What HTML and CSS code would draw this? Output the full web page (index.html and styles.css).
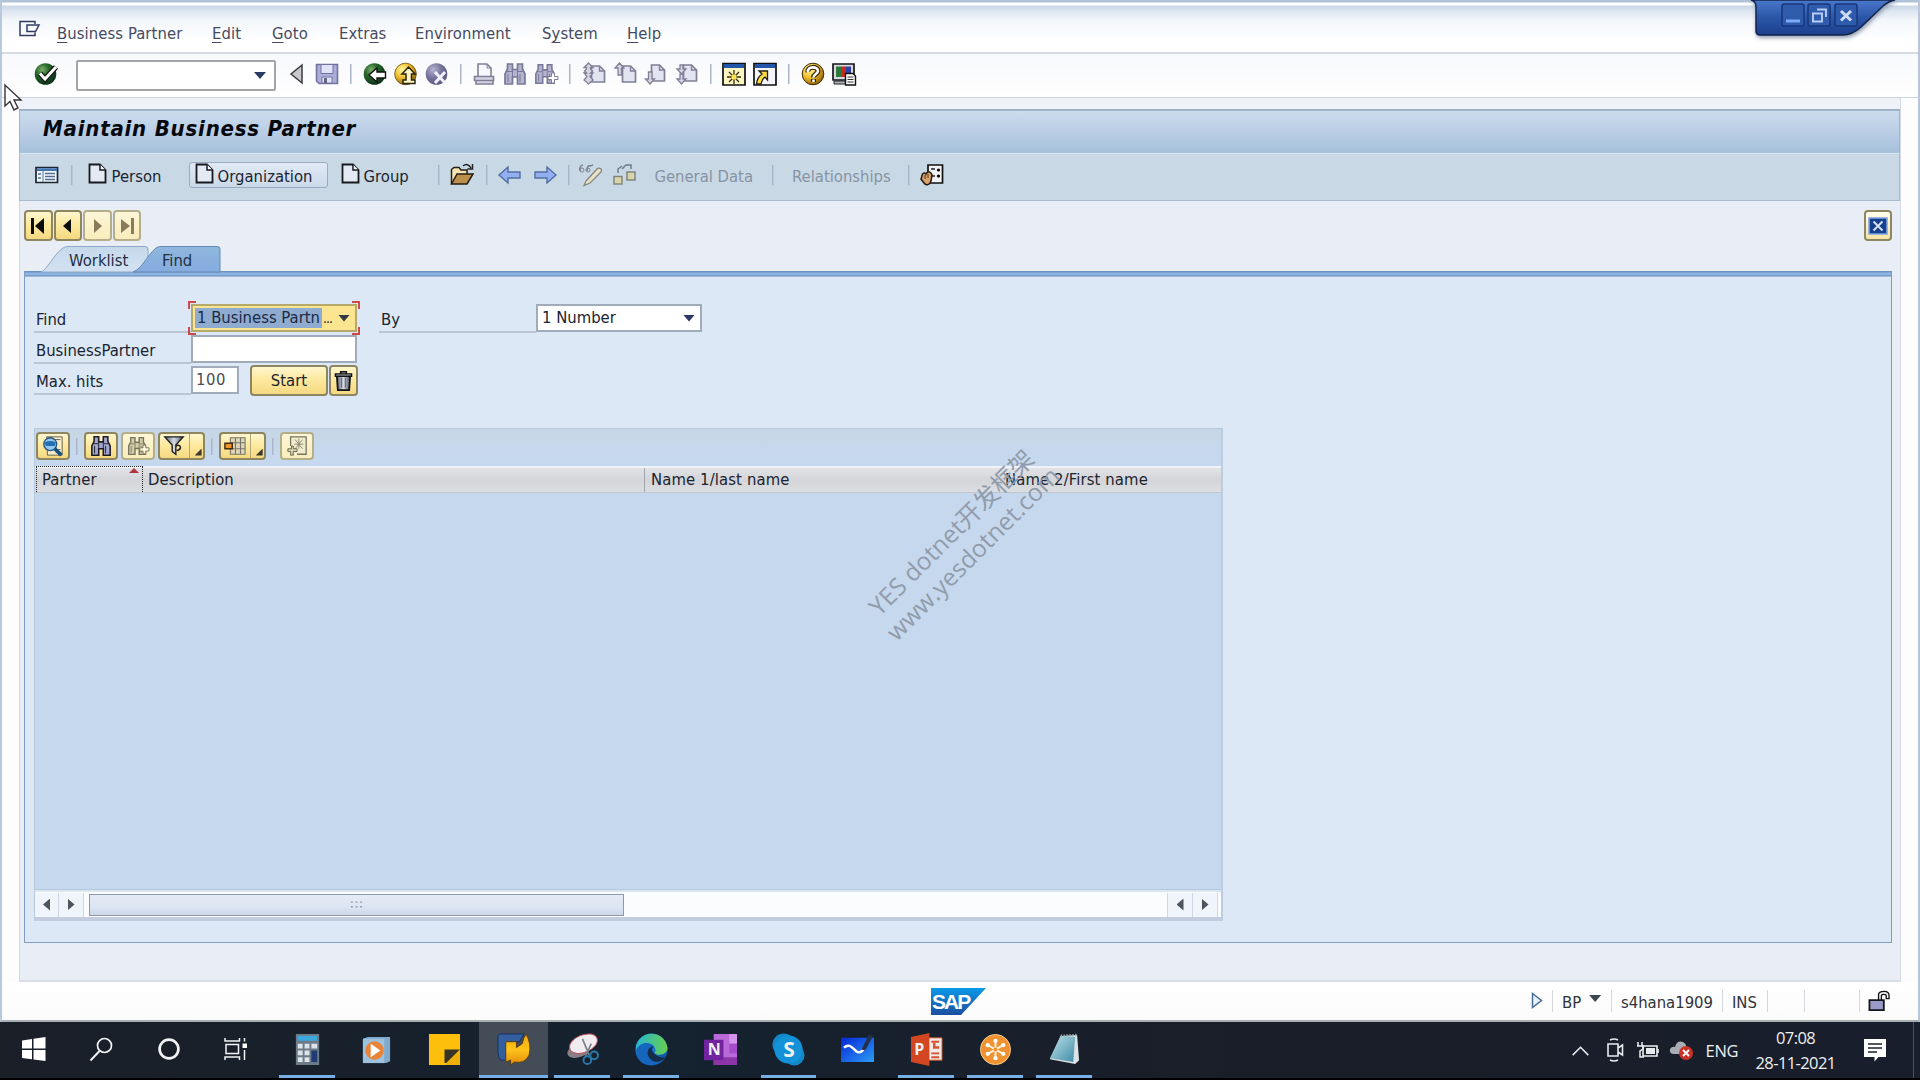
FILE: index.html
```html
<!DOCTYPE html>
<html lang="en">
<head>
<meta charset="utf-8">
<title>Maintain Business Partner</title>
<link rel="stylesheet" href="styles.css">
</head>
<body>
<svg class="defs" aria-hidden="true">
  <defs>
    <radialGradient id="gGreen" cx=".35" cy=".3" r=".75"><stop offset="0" stop-color="#7fae6c"/><stop offset=".4" stop-color="#28692b"/><stop offset="1" stop-color="#0a2c16"/></radialGradient>
    <radialGradient id="gGold" cx=".35" cy=".3" r=".75"><stop offset="0" stop-color="#fff7a0"/><stop offset=".5" stop-color="#f0bd2a"/><stop offset="1" stop-color="#8a5b08"/></radialGradient>
    <radialGradient id="gMauve" cx=".35" cy=".3" r=".75"><stop offset="0" stop-color="#b5b3cf"/><stop offset=".5" stop-color="#77759c"/><stop offset="1" stop-color="#5a587c"/></radialGradient>
    <linearGradient id="gSteel"><stop offset="0" stop-color="#5a6270"/><stop offset=".5" stop-color="#d5dae2"/><stop offset="1" stop-color="#4c5360"/></linearGradient>
    <linearGradient id="gSap" x2="0" y2="1"><stop offset="0" stop-color="#0a9ae8"/><stop offset="1" stop-color="#1c4ea0"/></linearGradient>
    <linearGradient id="gTab" x2="0" y2="1"><stop offset="0" stop-color="#4a78cb"/><stop offset=".5" stop-color="#2b56a8"/><stop offset="1" stop-color="#1b3f8c"/></linearGradient>
    <linearGradient id="gIdle" x2="0" y2="1"><stop offset="0" stop-color="#c5d9ea"/><stop offset="1" stop-color="#d3e2f3"/></linearGradient>
    <linearGradient id="gOn" x2="0" y2="1"><stop offset="0" stop-color="#8fb7dd"/><stop offset="1" stop-color="#86abdf"/></linearGradient>
    <linearGradient id="gFlame" x2="0" y2="1"><stop offset="0" stop-color="#f3a90c"/><stop offset=".5" stop-color="#ffc21a"/><stop offset="1" stop-color="#e08a0a"/></linearGradient>
    <linearGradient id="gEdge" x2=".6" y2="1"><stop offset="0" stop-color="#2eb9d4"/><stop offset=".6" stop-color="#1378cf"/><stop offset="1" stop-color="#0c50a0"/></linearGradient>
    <linearGradient id="gEdge2"><stop offset="0" stop-color="#28b6cf"/><stop offset="1" stop-color="#66cf52"/></linearGradient>
    <linearGradient id="gBoard" x2="1" y2="1"><stop offset="0" stop-color="#0528d8"/><stop offset="1" stop-color="#2d9bf5"/></linearGradient>
    <linearGradient id="gNote" x2="1" y2="1"><stop offset="0" stop-color="#bfe3ec"/><stop offset="1" stop-color="#3f8ba4"/></linearGradient>
  </defs>
  <symbol id="doc" viewBox="0 0 20 22"><path d="M1.500 1.500H12L17.500 7V19.500H1.500Z" fill="#e3eaf4" stroke="#17191f" stroke-width="1.800"/><path d="M12 1.500V7H17.500" fill="#fff" stroke="#17191f" stroke-width="1.500"/></symbol>
  <symbol id="bino" viewBox="0 0 24 24"><path d="M4.500 2h5v5.500h5V2h5v5L22 12v10h-7.500v-7h-5v7H2V12l2.500-5Z" stroke-width="1.700" stroke="currentColor"/><path d="M9.500 8v7m5-7v7M4 9.500h5m6 0h5M5 12v8m12-8v8" stroke="currentColor" fill="none"/></symbol>
  <symbol id="page" viewBox="0 0 16 20"><path d="M1.500 2H9.500L14.500 7V18H1.500Z" fill="#e3e4f2" stroke="#807f97" stroke-width="1.700"/><path d="M9.500 2V7H14.500" fill="none" stroke="#807f97" stroke-width="1.400"/></symbol>
</svg>

<div class="window">
  <nav class="menubar">
    <svg class="sysmenu" viewBox="0 0 22 18"><path d="M16 4V1.500H1V15.500H16V12.500M20 5H8V11.500H16.500Z" fill="none" stroke="#303c62" stroke-width="1.500"/></svg>
    <span class="m1"><u>B</u>usiness Partner</span><span class="m2"><u>E</u>dit</span><span class="m3"><u>G</u>oto</span><span class="m4">Extr<u>a</u>s</span><span class="m5">En<u>v</u>ironment</span><span class="m6">S<u>y</u>stem</span><span class="m7"><u>H</u>elp</span>
  </nav>

  <div class="stdbar">
    <svg class="ic" viewBox="0 0 24 24"><circle cx="11.500" cy="12" r="10.800" fill="url(#gGreen)"/><path d="M6 11.500L11 17L22 5" fill="none" stroke="#111" stroke-width="5.500"/><path d="M6 11.500L11 17L22 5" fill="none" stroke="#fff" stroke-width="3"/></svg>
    <div class="command"><i class="drop"></i></div>
    <svg class="ic" viewBox="0 0 24 24"><path d="M18 3V21L7 12Z" fill="#c8c8cc" stroke="#3b3b40" stroke-width="1.500"/></svg>
    <svg class="ic" viewBox="0 0 24 24"><path d="M1.500 2.500H22.500V21.500H4L1.500 19Z" fill="#aaaed9" stroke="#7473a0" stroke-width="1.600"/><path d="M6 2.500h12v9H6Z" fill="#dfe3f7" stroke="#7473a0"/><path d="M7 15h10v6H7Z" fill="#e5e6f4" stroke="#7473a0"/><path d="M9 16h3v5H9Z" fill="#62618c"/></svg>
    <i class="sep"></i>
    <svg class="ic" viewBox="0 0 24 24"><circle cx="11.500" cy="12" r="10.800" fill="url(#gGreen)"/><path d="M6 13L14 6V10H22.500V16H14V20Z" fill="#fff" stroke="#111" stroke-width="1.400"/></svg>
    <svg class="ic" viewBox="0 0 24 24"><circle cx="11.500" cy="12" r="10.800" fill="url(#gGold)" stroke="#6b4a0b" stroke-width=".8"/><path d="M14.500 5L21 12H17.500V18H21V21.500H9V18H12V12H8Z" fill="#fff6c4" stroke="#2a2414" stroke-width="1.500"/></svg>
    <svg class="ic" viewBox="0 0 24 24"><circle cx="11.500" cy="12" r="10.800" fill="url(#gMauve)"/><path d="M10 10L20 21M20 10L10 21" stroke="#f1f0fb" stroke-width="3"/></svg>
    <i class="sep"></i>
    <svg class="ic" viewBox="0 0 24 24"><path d="M6 14V2h9l4 4v8" fill="#f7f7fd" stroke="#817f98" stroke-width="1.600"/><path d="M15 2v4h4" fill="none" stroke="#817f98"/><path d="M2.500 14.500h19v4h-19ZM4 18.500h17V22H4Z" fill="#d4d4e4" stroke="#817f98" stroke-width="1.600"/></svg>
    <svg class="ic bino-off"><use href="#bino"/></svg>
    <svg class="ic" viewBox="0 0 24 24"><g class="bino-off"><use href="#bino" width="22" height="24"/></g><path d="M14 14.500h3.500V11h3v3.500H24v3h-3.500V21h-3v-3.500H14Z" fill="#fff" stroke="#817f98"/></svg>
    <i class="sep"></i>
    <svg class="ic" viewBox="0 0 24 24"><use href="#page" x="8" y="2" width="16" height="20"/><path d="M6.500 1L11 5.500H8.500V7L10.500 9L8.500 11H11L8 14.500L11 18L6.500 22L2 18L5 14.500L2 11H4.500L2.500 9L4.500 7V5.500H2Z" fill="#d5d5e4" stroke="#807f97" stroke-width="1.300"/></svg>
    <svg class="ic" viewBox="0 0 24 24"><use href="#page" x="8" y="2" width="16" height="20"/><path d="M6.500 1L11 6H8.500V13H5V6H2Z" fill="#d5d5e4" stroke="#807f97" stroke-width="1.300"/></svg>
    <svg class="ic" viewBox="0 0 24 24"><use href="#page" x="6" y="1" width="16" height="20"/><path d="M4.500 10H8V17H10.500L6 22L1.500 17H4.500Z" fill="#d5d5e4" stroke="#807f97" stroke-width="1.300"/></svg>
    <svg class="ic" viewBox="0 0 24 24"><use href="#page" x="7" y="1" width="16" height="20"/><path d="M5 3H8V7H11L6.500 12L2 7H5ZM5 12H8V17H11L6.500 22L2 17H5Z" fill="#d5d5e4" stroke="#807f97" stroke-width="1.300"/></svg>
    <i class="sep"></i>
    <svg class="ic" viewBox="0 0 24 24"><path d="M1 1.500H23V23H1Z" fill="#fff6c0" stroke="#101010" stroke-width="1.700"/><path d="M2 2H22V6H2Z" fill="#2355a8"/><path d="M12 8v14M5 15h14M7 10l10 10M17 10L7 20" stroke="#30290c" stroke-width="1.300"/><circle cx="12" cy="15" r="2.600" fill="#ffe54a"/></svg>
    <svg class="ic" viewBox="0 0 24 24"><path d="M1 1.500H23V23H1Z" fill="#f4f5fa" stroke="#101010" stroke-width="1.700"/><path d="M2 2H22V6H2Z" fill="#2355a8"/><path d="M6 9H14.500V18L12 15C9 17 9 19 8 22H3.500C4 17 6 14 9 12Z" fill="#fbdc44" stroke="#231e0b" stroke-width="1.300"/></svg>
    <i class="sep"></i>
    <svg class="ic" viewBox="0 0 24 24"><circle cx="12" cy="12" r="10.800" fill="url(#gGold)" stroke="#3d2b06"/><path d="M7 10C6 4 17 4 17 9C17 12 12.500 12 12.500 15.500M12.500 17V20" fill="none" stroke="#33270c" stroke-width="5"/><path d="M7 10C6 4 17 4 17 9C17 12 12.500 12 12.500 15.500M12.500 17.500V20" fill="none" stroke="#fff" stroke-width="2.600"/></svg>
    <svg class="ic" viewBox="0 0 24 24"><path d="M1 2H22V18H1Z" fill="#d7d9de" stroke="#15171a" stroke-width="1.700"/><path d="M2 19h18v3H2Z" fill="#aeb1ba" stroke="#222"/><path d="M4 4.500h5V15H4Z" fill="#2c7a38"/><path d="M9 4.500h5V15H9Z" fill="#c62b22"/><path d="M14 4.500h5V15h-5Z" fill="#2b3fa5"/><path d="M13.500 11.500H21L23.500 14V23H13.500Z" fill="#fff" stroke="#111" stroke-width="1.400"/><path d="M15.500 15h6m-6 2.500h6m-6 2.500h6" stroke="#333"/></svg>
  </div>

  <main class="screen">
    <header class="title">Maintain Business Partner</header>
    <div class="appbar">
      <svg class="ai a1" viewBox="0 0 24 18"><path d="M1 1.500H22.500V16.500H1Z" fill="#f3f7fc" stroke="#1c2531" stroke-width="1.700"/><path d="M2 2.300h20V5H2Z" fill="#4077b4"/><path d="M8 5v11" stroke="#4b77a5"/><path d="M10 7.500h10M10 10.500h10M10 13.500h10M3 8h3m-3 4h3" stroke="#526f91" stroke-width="1.500"/></svg>
      <i class="sep s1"></i>
      <svg class="doc d1"><use href="#doc"/></svg><span class="p1">Person</span>
      <button class="org"><svg class="doc"><use href="#doc"/></svg><span>Organization</span></button>
      <svg class="doc d3"><use href="#doc"/></svg><span class="p3">Group</span>
      <i class="sep s2"></i>
      <svg class="ai" viewBox="0 0 24 24"><path d="M1.500 21V6.500L4 4.500H9L11 7H17V11" fill="#f5e3b4" stroke="#241d12" stroke-width="1.500"/><path d="M1.500 21L7 11H23L17 21Z" fill="#bc8f4c" stroke="#241d12" stroke-width="1.500"/><path d="M13 3C16 .5 19 1.500 21 5M22.500 1V6H17.500" fill="none" stroke="#222" stroke-width="1.500"/></svg>
      <i class="sep s3"></i>
      <svg class="ai" viewBox="0 0 24 24"><path d="M1 12L10 4V9H22V15H10V20Z" fill="#92b0f1" stroke="#526f9f" stroke-width="1.400"/></svg>
      <svg class="ai a4" viewBox="0 0 24 24"><path d="M23 12L14 4V9H2V15H14V20Z" fill="#92b0f1" stroke="#526f9f" stroke-width="1.400"/></svg>
      <i class="sep s4"></i>
      <svg class="ai" viewBox="0 0 24 24"><path d="M7 18L18 6C20 4 24 6 22 9L11 20L5 22.500Z" fill="#e7e1c5" stroke="#85887f" stroke-width="1.300"/><path d="M1 8C0 5 2 2 4 2M8 8C8 4 9 2 11 3L14 2" fill="none" stroke="#7b848e" stroke-width="1.500"/><circle cx="3" cy="7" r="2" fill="none" stroke="#7b848e"/><circle cx="9" cy="7" r="2" fill="none" stroke="#7b848e"/></svg>
      <svg class="ai a6" viewBox="0 0 24 24"><path d="M2 13.500h8V21H2ZM15 9h8v8h-8Z" fill="#d9d5a9" stroke="#80877f" stroke-width="1.500"/><path d="M6 10V6L10 3M10 6L14 2H19V6" fill="none" stroke="#727b86" stroke-width="1.500"/></svg>
      <span class="off g1">General Data</span>
      <i class="sep s5"></i>
      <span class="off g2">Relationships</span>
      <i class="sep s6"></i>
      <svg class="ai" viewBox="0 0 24 24"><path d="M8 2H22.500V20H8Z" fill="#f2f3f6" stroke="#111" stroke-width="1.700"/><path d="M11 6h4m-4 7h4" stroke="#222" stroke-width="1.500"/><circle cx="18.500" cy="7" r="1.600"/><circle cx="18.500" cy="13" r="1.600"/><path d="M2 13C2 10 5 9 6 11C8 7 11 9 12 12L11 18C10 22 6 23 4 20L1 16Z" fill="#d9a36b" stroke="#23180f" stroke-width="1.500"/><path d="M5 12v4m3-5v4" stroke="#4c3018"/></svg>
    </div>

    <div class="work">
      <div class="navrow">
        <button class="y nb"><svg viewBox="0 0 14 16"><path d="M0 0h3v16H0ZM13 0v16L4 8Z"/></svg></button>
        <button class="y nb"><svg viewBox="0 0 14 16"><path d="M10 1v14L2 8Z"/></svg></button>
        <button class="y nb dim"><svg viewBox="0 0 14 16"><path d="M4 1v14l8-7Z"/></svg></button>
        <button class="y nb dim"><svg viewBox="0 0 14 16"><path d="M11 0h3v16h-3ZM1 1v14l9-7Z"/></svg></button>
        <button class="y nb close"><svg viewBox="0 0 20 18"><path d="M1 1h18v16H1Z" fill="#173f8f" stroke="#7fa5de" stroke-width="1.600"/><path d="M5.500 4.500l9 9m0-9l-9 9" stroke="#d4e0ef" stroke-width="2"/></svg></button>
      </div>
      <div class="tabs">
        <svg viewBox="0 0 200 26"><path d="M17 26C23 24 30 8 39 2Q41 .5 44 .5H121Q124 .5 124 3V26Z" fill="url(#gIdle)" stroke="#8ea9c6"/><path d="M109 26C118 23 124 8 132 2Q134 .5 137 .5H193Q196 .5 196 3V26Z" fill="url(#gOn)" stroke="#6289b5"/></svg>
        <span class="t1">Worklist</span><span class="t2">Find</span>
      </div>
      <section class="panel">
        <div class="row">
          <label>Find</label>
          <div class="field combo focus"><mark>1 Business Partn</mark><span class="dots">...</span><i class="drop"></i><i class="c tl"></i><i class="c tr"></i><i class="c bl"></i><i class="c br"></i></div>
          <label class="by">By</label>
          <div class="field combo">1 Number<i class="drop"></i></div>
        </div>
        <div class="row"><label>BusinessPartner</label><div class="field"></div></div>
        <div class="row"><label>Max. hits</label><div class="field hits">100</div>
          <button class="y start">Start</button>
          <button class="y trash"><svg viewBox="0 0 20 22"><path d="M3 6h14l-1 14.500H4Z" fill="url(#gSteel)" stroke="#111" stroke-width="1.800"/><path d="M1.500 3.500h17V6h-17ZM7 3V1.200h6V3" fill="#aab0ba" stroke="#111" stroke-width="1.500"/><path d="M8 8v10m4-10v10" stroke="#596170"/></svg></button>
        </div>

        <div class="grid">
          <div class="gridbar">
            <button class="y gb"><svg viewBox="0 0 24 24"><path d="M5 2H22V22H6Z" fill="#f6edc6" stroke="#5d5a46"/><path d="M14 5h6m-6 11h6m-5 3h5" stroke="#555"/><circle cx="9" cy="10" r="7" fill="#93c8ee" stroke="#28537c" stroke-width="1.500"/><path d="M3 8Q9 5 15 8L14 12H4Z" fill="#236fb4"/><path d="M14 15L21 22" stroke="#1a4f82" stroke-width="4"/></svg></button>
            <i class="sep"></i>
            <button class="y gb"><svg class="bino-on"><use href="#bino"/></svg></button>
            <button class="y gb gb3 dim"><svg viewBox="0 0 24 24"><g class="bino-dim"><use href="#bino" width="22" height="24"/></g><path d="M14 14h3.500v-3h3v3H24v3.500h-3.500v3h-3v-3H14Z" fill="#fffadd" stroke="#77735b"/></svg></button>
            <button class="y gb split gb4"><svg viewBox="0 0 24 24"><path d="M2 2H22L14 11V21L10 18V11Z" fill="url(#gSteel)" stroke="#1b1d22" stroke-width="1.500"/><path d="M14 12C20 9 21 16 15 17" fill="none" stroke="#222" stroke-width="1.600"/></svg><i class="bar"></i><i class="corner"></i></button>
            <i class="sep"></i>
            <button class="y gb split"><svg viewBox="0 0 24 24"><path d="M7 3H23V21H7ZM7 8.500H23M7 15H23M12.500 3V21M18 3V21" fill="#ddd6b4" stroke="#77756a" stroke-width="1.200"/><path d="M1 9h8v6H1Z" fill="#f09329" stroke="#422c12" stroke-width="1.600"/></svg><i class="bar"></i><i class="corner"></i></button>
            <i class="sep"></i>
            <button class="y gb dim2"><svg viewBox="0 0 24 24"><path d="M5 12V2H22V21H12" fill="#f2edcf" stroke="#77745f" stroke-width="1.400"/><path d="M10 5l8 10M18 5l-8 10M14 4v11M9 10h10" stroke="#88846c"/><path d="M2 15h4v-3h2v3h4v3H8v4H5v-4H2Z" fill="#d8d2ab" stroke="#66634f"/></svg></button>
          </div>
          <div class="heads"><div class="h1c">Partner<i class="sort"></i></div><div class="h2c">Description</div><div class="h3c">Name 1/last name</div><div class="h4c">Name 2/First name</div></div>
          <div class="body"></div>
          <div class="scroll">
            <span class="sb"><i class="l"></i></span><span class="sb w"><i class="r"></i></span>
            <div class="thumb"><svg viewBox="0 0 14 9"><path d="M1 2h2m3 0h2m3 0h2M1 7h2m3 0h2m3 0h2" stroke="#8d99ad" stroke-width="1.500"/></svg></div>
            <div class="track"></div>
            <span class="sb w"><i class="l"></i></span><span class="sb w"><i class="r"></i></span>
          </div>
        </div>
      </section>
    </div>
  </main>

  <footer class="status">
    <div class="saplogo"><svg viewBox="0 0 55 27"><path d="M0 0H55L30 27H0Z" fill="url(#gSap)"/></svg><b>SAP</b></div>
    <svg class="play" viewBox="0 0 12 17"><path d="M1.500 1.500L10.500 8.500L1.500 15.500Z" fill="#e8f2fc" stroke="#466a96" stroke-width="1.500"/></svg>
    <span class="st bp">BP<i class="drop"></i></span><span class="st host">s4hana1909</span><span class="st ins">INS</span><span class="st e1"></span><span class="st e2"></span><span class="st lockc"><svg viewBox="0 0 24 23"><path d="M11 11V5Q11 1.500 17 1.500Q22 1.500 22 6V9H19V6Q19 4.500 16.500 4.500Q14 4.500 14 6V11" fill="#f0f0f4" stroke="#111" stroke-width="1.400"/><path d="M1.500 10.500H16.500V21H1.500Z" fill="#9a9ac8" stroke="#15151c" stroke-width="1.900"/></svg></span>
  </footer>

  <div class="wintab">
    <svg viewBox="0 0 144 38"><path d="M0 0Q5 1 5 7V31Q5 35 9 35H92Q101 35 110 27L132 6Q138 1 144 0Z" fill="url(#gTab)" stroke="#132449" stroke-width="1.500"/><g fill="#2f5bad" stroke="#17377c" stroke-width="1.500"><rect x="31" y="4" width="22" height="22" rx="2"/><rect x="57" y="4" width="22" height="22" rx="2"/><rect x="84" y="4" width="22" height="22" rx="2"/></g><path d="M35 21H49" stroke="#7fa8f6" stroke-width="3"/><path d="M62 13.500H71V21.500H62ZM66 9.500H75V17" fill="none" stroke="#b9cdf6" stroke-width="1.900"/><path d="M90 11L100 20.500M100 11L90 20.500" stroke="#cfdbf5" stroke-width="3"/></svg>
  </div>
</div>

<div class="taskbar">
  <span class="tk sys"><svg viewBox="0 0 24 24"><path d="M0 3.500L10 2V11.500H0ZM11.500 1.800L23.500 0V11.500H11.500ZM0 13H10V22.300L0 21ZM11.500 13H23.500V24L11.500 22.500Z" fill="#fff"/></svg></span>
  <span class="tk sys"><svg viewBox="0 0 24 24"><circle cx="15.500" cy="8.500" r="7" fill="none" stroke="#f2f4f6" stroke-width="1.700"/><path d="M10.500 14L1.500 23.500" stroke="#f2f4f6" stroke-width="1.900"/></svg></span>
  <span class="tk sys"><svg viewBox="0 0 24 24"><circle cx="12" cy="12" r="9.400" fill="none" stroke="#f2f4f6" stroke-width="2.700"/></svg></span>
  <span class="tk sys"><svg viewBox="0 0 24 24"><path d="M1 1V4H15.500V1M1 23V20H15.500V23M2 7.500H14.500V16.500H2ZM20.500 1V4.500M20.500 13V23" fill="none" stroke="#f2f4f6" stroke-width="1.500"/><path d="M18.500 6.500H23V11H18.500Z" fill="#fff"/></svg></span>
  <span class="tk app run"><svg viewBox="0 0 34 34"><path d="M5 1H29V33H5Z" fill="#6d7b87"/><path d="M7 3H27V8H7Z" fill="#3ba7df"/><path d="M7 11h5v5H7Zm7 0h5v5h-5Zm7 0h6v5h-6ZM7 18h5v5H7Zm7 0h5v5h-5ZM7 25h5v5H7Zm7 0h5v5h-5Z" fill="#dce3ea"/><path d="M21 18h6v12h-6Z" fill="#1e3d75"/></svg></span>
  <span class="tk app"><svg viewBox="0 0 34 34"><path d="M3 6L8 4H31V29L27 31H3Z" fill="#7fa9cd"/><path d="M3 6H25V31H3Z" fill="#9cc2dd"/><circle cx="15" cy="18" r="9.500" fill="#e8843a"/><path d="M11 11L21 18L11 25Z" fill="#fff"/></svg></span>
  <span class="tk app"><svg viewBox="0 0 34 34"><path d="M1 1H33V33H1Z" fill="#fdbf0b"/><path d="M17 17H33L19 31H17Z" fill="#373425"/><path d="M33 17L19 31V33H33Z" fill="#eeaf09"/></svg></span>
  <span class="tk app run sel"><svg viewBox="0 0 34 34"><path d="M1 3Q1 1 4 1H28L23 9H11Q9 9 9 12V28H4Q1 25 1 20Z" fill="#345f9f" stroke="#18315f"/><path d="M9 9H20V15L26 11Q27 5 30 1Q36 12 33 23Q29 32 18 30L14 33V28L9 30Z" fill="url(#gFlame)" stroke="#573d15"/></svg></span>
  <span class="tk app run"><svg viewBox="0 0 34 34"><ellipse cx="13" cy="18" rx="12" ry="7" fill="#8b7f87" transform="rotate(-20 13 18)"/><ellipse cx="18" cy="11" rx="15" ry="9" fill="#f1ecef" stroke="#b4525d" transform="rotate(-22 18 11)"/><path d="M17 6L24 23M26 11L20 24" stroke="#75838c" stroke-width="1.700"/><circle cx="29" cy="23" r="4" fill="none" stroke="#2b79ac" stroke-width="2"/><circle cx="22" cy="28" r="4" fill="none" stroke="#2b79ac" stroke-width="2"/></svg></span>
  <span class="tk app run"><svg viewBox="0 0 34 34"><circle cx="17" cy="17" r="16.500" fill="url(#gEdge)"/><path d="M1 14C5-3 30-4 33.500 15C34 22 25 24 20 21C23 17 20 11 14 11C7 11 2 15 1 20Z" fill="url(#gEdge2)"/><path d="M1 18C5 8 17 9 19 14C13 14 11 25 20 29C24 31 29 28 31 26C24 36 2 37 1 18Z" fill="#1766bd"/><path d="M20 21C16 18 18 16 19 14C12 14 10 25 19 29C24 31 29 28 31 25Q25 26 20 21Z" fill="#152d4b"/></svg></span>
  <span class="tk app"><svg viewBox="0 0 34 34"><path d="M10 1H34V33H10Z" fill="#b96ad8"/><path d="M26 1h8v10h-8Z" fill="#d494ed"/><path d="M26 11h8v10h-8Z" fill="#a54ccb"/><path d="M10 25H34V33H10Z" fill="#8c34a8"/><path d="M0 7H20V28H0Z" fill="#7224a0"/></svg><b class="n">N</b></span>
  <span class="tk app run"><svg viewBox="0 0 34 34"><circle cx="12" cy="12" r="11.500" fill="#1487c9"/><circle cx="23" cy="23" r="10.500" fill="#1487c9"/><circle cx="17" cy="17" r="14.500" fill="#1392d7"/></svg><b>S</b></span>
  <span class="tk app"><svg viewBox="0 0 34 34"><path d="M0 5H34V30H0Z" fill="url(#gBoard)"/><path d="M3 15C9 10 12 16 16 19S21 18 25 16" fill="none" stroke="#fff" stroke-width="2.500"/><path d="M21 17L29 1L33 3L25 18Z" fill="#23324b"/></svg></span>
  <span class="tk app run"><svg viewBox="0 0 34 34"><path d="M15 5H33V28H15Z" fill="#f5e9e5" stroke="#c95832"/><path d="M22 9h8m-8 12h8m-8 4h8" stroke="#d35230" stroke-width="2"/><path d="M25 10v5h5" fill="none" stroke="#d35230" stroke-width="2.500"/><path d="M1 4L20 0V34L1 30Z" fill="#d24621"/></svg><b class="n">P</b></span>
  <span class="tk app run"><svg viewBox="0 0 34 34"><circle cx="17" cy="17" r="15.500" fill="#ef922f" stroke="#f7cc94"/><g stroke="#fff2df" stroke-width="2"><path d="M17 8V26M9 12.500L25 21.500M25 12.500L9 21.500"/></g><g fill="#fff"><circle cx="17" cy="8" r="2.200"/><circle cx="17" cy="26" r="2.200"/><circle cx="9" cy="12.500" r="2.200"/><circle cx="25" cy="21.500" r="2.200"/><circle cx="25" cy="12.500" r="2.200"/><circle cx="9" cy="21.500" r="2.200"/></g><circle cx="17" cy="17" r="2" fill="#ef922f"/></svg></span>
  <span class="tk app run"><svg viewBox="0 0 34 34"><path d="M13 3L30 2L32 28L28 32L2 27Z" fill="#dce3e5"/><path d="M13 3L28 4L26 30L2 26Z" fill="url(#gNote)"/><path d="M13 3L30 2" stroke="#9aa" stroke-width="2.500" stroke-dasharray="1.500 1.500"/></svg></span>
  <div class="tray">
    <svg class="ch" viewBox="0 0 20 12"><path d="M1.500 11L10 2.500L18.500 11" fill="none" stroke="#e8ebee" stroke-width="1.700"/></svg>
    <svg class="cam" viewBox="0 0 18 24"><path d="M2 6H12V18H2ZM12 10L16.500 7V17L12 14M4 2Q8 0 12 2M4 22Q8 24 12 22" fill="none" stroke="#e8ebee" stroke-width="1.600"/></svg>
    <svg class="bat" viewBox="0 0 24 18"><path d="M7 5H21V15H7ZM22 8V12" fill="none" stroke="#eceff1" stroke-width="1.600"/><path d="M10 7H19V13H10Z" fill="#e8ebee"/><path d="M2 1V5M6 1V5M1 5H7V8Q4 10 4 10V16H8" fill="none" stroke="#eceff1" stroke-width="1.500"/></svg>
    <svg class="cloud" viewBox="0 0 24 22"><path d="M5 15Q0 15 1 10Q3 7 6 8Q8 1 14 3Q18 5 17 9Q22 10 20 15Z" fill="#abadb4"/><circle cx="17" cy="14" r="7" fill="#c93327"/><path d="M14 11L20 17M20 11L14 17" stroke="#fff" stroke-width="1.800"/></svg>
    <span class="eng">ENG</span>
    <div class="clock"><span>07:08</span><span>28-11-2021</span></div>
    <svg class="note" viewBox="0 0 24 24"><path d="M1 1H23V19H15.500L11.500 23.500V19H1Z" fill="#fff"/><path d="M5 6H19M5 10H19M5 14H14" stroke="#1a212c" stroke-width="1.400"/></svg>
  </div>
</div>

<div class="watermark">YES dotnet开发框架<br>www.yesdotnet.com</div>
<svg class="cursor" viewBox="0 0 18 27"><path d="M1 1V22L6 17.500L10 26L14 24L10 16H17Z" fill="#fff" stroke="#34343c" stroke-width="1.400"/></svg>
</body>
</html>
```
FILE: styles.css
```css
* { box-sizing: border-box; }
body { margin: 0; width: 1920px; height: 1080px; overflow: hidden; position: relative; background: #000; font: 16.5px/20px "DejaVu Sans Condensed", "DejaVu Sans", sans-serif; font-stretch: condensed; color: #1a2430; }
svg { display: block; flex: none; overflow: visible; }
i, button, span { flex: none; }
button { margin: 0; padding: 0; font: inherit; color: inherit; }
.defs { position: absolute; width: 0; height: 0; }

.window { position: relative; width: 1920px; height: 1022px; display: flex; flex-direction: column; background: #fdfdfe; border-left: 2px solid #b9c9dd; border-right: 2px solid #b9c5da; border-bottom: 2px solid #a6b0b4; }
.menubar { height: 54px; flex: none; position: relative; display: flex; padding: 24px 0 0 17px; letter-spacing: .08px; color: #454a62; border-bottom: 2px solid #d8dbe3; background: linear-gradient(#afc1d8 0, #afc1d8 2px, #fff 3px, #fff 5px, #cbd7e6 6px, #dce5f0 11px, #f3f6fb 20px, #fff 40px); }
.menubar u { text-decoration-thickness: 1px; text-underline-offset: 3px; }
.sysmenu { width: 22px; height: 18px; margin-top: -4px; }
.menubar span { white-space: nowrap; }
.m1 { margin-left: 16px; width: 155px; }
.m2 { width: 60px; }
.m3 { width: 67px; }
.m4 { width: 76px; }
.m5 { width: 127px; }
.m6 { width: 85px; }

.stdbar { height: 44px; flex: none; display: flex; align-items: center; gap: 7px; padding: 0 0 3px 32px; border-bottom: 1px solid #ced4df; background: linear-gradient(#f8f9fc, #fff); }
.ic { width: 24px; height: 24px; }
.command { width: 200px; height: 31px; margin: 3px 1px 0 11px; border: 2px solid #a3a4aa; border-radius: 2px; background: #fff; display: flex; align-items: center; justify-content: flex-end; padding-right: 8px; }
.drop { width: 12px; height: 7px; background: #2c3963; clip-path: polygon(0 0, 100% 0, 50% 100%); }
.sep { width: 9.6px; height: 20px; display: block; background: linear-gradient(#aab6c8, #aab6c8) center / 1.5px 100% no-repeat; }
.bino-off { color: #79779a; fill: #b4b4cf; }
.bino-on { color: #1b1c25; fill: #a3a6cf; }
.bino-dim { color: #77755f; fill: #d2cda9; }

.screen { width: 1882px; height: 884px; flex: none; margin: 0 0 0 17px; padding-top: 11px; display: flex; flex-direction: column; background: #eff2f8; border-right: 1px solid #d3dbe6; border-bottom: 2px solid #dadfe5; }
.title { height: 44px; flex: none; padding: 6px 0 0 23px; border: 1px solid #a1b4c8; border-top: 2px solid #9fb2c7; border-bottom: 0; font: italic bold 22px/24px "DejaVu Sans Condensed", "DejaVu Sans", sans-serif; font-stretch: condensed; letter-spacing: .8px; color: #05080c; background: linear-gradient(#cbdcec, #bccfe6 45%, #a8c2dc 95%); }
.appbar { height: 48px; flex: none; display: flex; align-items: center; padding: 0 0 4px 15px; border: 1px solid #a9bccc; border-top: 1px solid #d5e5f1; background: #c9d8e5; white-space: nowrap; }
.ai { width: 24px; height: 24px; }
.a1 { height: 18px; }
.a4 { margin-left: 11px; }
.a6 { margin-left: 9px; }
.s1 { margin: 0 11px 0 8px; }
.doc { width: 20px; height: 22px; margin-bottom: 2px; }
.p1 { margin-left: 4px; padding-top: 3px; width: 77px; }
.org { width: 139px; height: 26px; padding: 0 0 0 5px; display: flex; align-items: center; border: 1px solid #9aabc1; border-radius: 3px; background: linear-gradient(#e1eaf5, #cbd9e9); }
.org span { margin-left: 3px; padding-top: 3px; }
.d3 { margin-left: 13px; }
.p3 { margin-left: 3px; padding-top: 3px; width: 70px; }
.s2 { margin-right: 7px; }
.s3 { margin: 0 6px 0 8px; }
.s4 { margin: 0 6px 0 7px; }
.off { color: #8694a4; padding-top: 3px; }
.g1 { margin-left: 18px; width: 114px; }
.s5 { margin-right: 14px; }
.g2 { width: 112px; }
.s6 { margin-right: 6px; }

.work { flex: 1; padding: 9px 8px 37px 4px; border-left: 1px solid #cdd8e5; background: #e9eef6; display: flex; flex-direction: column; }
.navrow { display: flex; gap: 1px; height: 31px; flex: none; }
.y { border: 2px solid #8e8660; border-radius: 4px; background: linear-gradient(#fff6ce, #fde9a0 45%, #f5d980); display: flex; align-items: center; justify-content: center; }
.nb { width: 28.5px; height: 31px; }
.nb svg { width: 14px; height: 16px; fill: #0c0c0c; }
.dim, .dim2 { border-color: #b5ae8b; background: linear-gradient(#fdf6d8, #f9edbb); }
.nb.dim svg { fill: #8b7b5c; }
.nb.close { margin-left: auto; background: linear-gradient(#fffdf0, #f8e5a4); }
.nb.close svg { width: 20px; height: 18px; }
.tabs { position: relative; height: 25px; margin-top: 5px; flex: none; display: flex; align-items: center; color: #222f40; }
.tabs svg { position: absolute; left: 0; top: 0; width: 200px; height: 26px; }
.tabs span { position: relative; padding-top: 4px; }
.t1 { margin-left: 45px; width: 93px; }
.panel { flex: 1; border: 1px solid #829cbd; border-top: 0; padding: 33px 0 0 9px; background: linear-gradient(#6b94c4 0, #6b94c4 1px, #8fb4e1 2px, #8fb4e1 4px, #6389b5 5px, #dce8f6 6px, #dce8f6); }
.row { display: flex; height: 31px; align-items: flex-start; }
.row label { width: 157px; height: 29px; padding: 6px 0 0 2px; border-bottom: 2px solid #bac6d4; white-space: nowrap; }
.field { position: relative; width: 166px; height: 28px; border: 2px solid #a0acba; background: #fff; white-space: nowrap; }
.combo { display: flex; align-items: center; padding: 0 5px 0 4px; }
.combo .drop { margin-left: auto; }
.focus { background: #fce590; border-color: #b5a96c; padding-left: 2px; }
mark { background: #8facd0; color: #1a2a44; height: 20px; padding: 0 0 0 2px; width: 127px; overflow: hidden; }
.dots { margin-left: 1px; font-size: 14px; letter-spacing: -1px; }
.focus .drop { background: #333b44; }
.c { position: absolute; width: 8px; height: 8px; border: 0 solid #cd4a48; }
.tl { left: -5px; top: -5px; border-width: 2px 0 0 2px; }
.tr { right: -5px; top: -5px; border-width: 2px 2px 0 0; }
.bl { left: -5px; bottom: -5px; border-width: 0 0 2px 2px; }
.br { right: -5px; bottom: -5px; border-width: 0 2px 2px 0; }
.row .by { margin-left: 22px; }
.hits { width: 48px; padding: 2px 0 0 3px; letter-spacing: .5px; color: #4b4c52; }
.start { width: 78px; height: 31px; margin: -1px 1px 0 11px; }
.trash { width: 29px; height: 31px; margin-top: -1px; }
.trash svg { width: 19px; height: 22px; }

.grid { width: 1189px; height: 493px; margin-top: 31px; border: 1px solid #b7c9dd; border-right: 2px solid #bdcce0; border-bottom: 4px solid #c2cee0; background: #c6d8ed; display: flex; flex-direction: column; }
.gridbar { height: 37px; flex: none; display: flex; align-items: center; padding: 1px 0 4px 1px; background: linear-gradient(#c7d6e4, #c6d8ed 60%); }
.gb { width: 34px; height: 28px; }
.gb svg { width: 22px; height: 22px; }
.gridbar .sep { margin: 0 2px; height: 17px; }
.gb3 { margin-left: 3px; }
.gb4 { margin-left: 3px; }
.split { width: 47.5px; justify-content: flex-start; padding-left: 3px; }
.bar { width: 1px; height: 24px; margin-left: 4px; background: #b4a979; }
.corner { width: 7px; height: 7px; margin: 12px 0 0 5px; background: #3c3a2c; clip-path: polygon(100% 0, 100% 100%, 0 100%); }
.heads { height: 27px; flex: none; display: flex; border-top: 2px solid #f0f3f7; border-bottom: 1px solid #c0c7d1; background: linear-gradient(#e1e3e7, #d4d5d8 50%, #dcdee3); line-height: 24px; letter-spacing: .12px; }
.h1c { position: relative; width: 107px; margin-left: 1px; padding-left: 5px; border: 1px dotted #222; border-bottom: 0; line-height: 25px; margin-top: -2px; }
.sort { position: absolute; right: 3px; top: 1px; width: 10px; height: 5px; background: #b2343c; clip-path: polygon(50% 0, 100% 100%, 0 100%); }
.h2c { width: 502px; padding-left: 5px; border-right: 1px solid #9ea6b1; }
.h3c { width: 360px; padding-left: 6px; }
.body { flex: 1; border-bottom: 1px solid #b3c8df; }
.scroll { height: 27px; flex: none; display: flex; align-items: center; background: #fafcfd; border-top: 2px solid #dce6f1; }
.sb { width: 24px; height: 24px; display: flex; align-items: center; justify-content: center; background: #f0f5fc; border-right: 1px solid #cfd9e6; }
.sb.w { width: 25px; }
.sb i { width: 7px; height: 12px; background: #4c545f; }
.l { clip-path: polygon(0 50%, 100% 0, 100% 100%); }
.r { clip-path: polygon(0 0, 100% 50%, 0 100%); }
.thumb { width: 535px; height: 22px; margin-left: 5px; display: flex; align-items: center; justify-content: center; border: 1px solid #8b9aad; background: linear-gradient(#e4ebf6, #dce5f2 60%, #ccd8e9); }
.thumb svg { width: 13px; height: 9px; }
.track { width: 544px; height: 24px; border-right: 1px solid #cfd9e6; }

.status { height: 38px; flex: none; display: flex; align-items: center; color: #30343a; background: linear-gradient(#fff, #fbfbfb); }
.saplogo { position: relative; width: 55px; height: 27px; margin-left: 929px; }
.saplogo svg { width: 55px; height: 27px; }
.saplogo b { position: absolute; left: 1px; top: 2px; font: bold 21px/24px "Liberation Sans", sans-serif; letter-spacing: -2px; color: #fff; }
.play { width: 12px; height: 17px; margin: -2px 9px 0 545px; }
.st { height: 22px; padding: 3px 0 0 9px; border-left: 1px solid #d5d8de; white-space: nowrap; }
.bp { width: 59px; display: flex; }
.bp .drop { margin: 2px 0 0 8px; background: #3c4653; }
.host { width: 111px; }
.ins { width: 45px; }
.e1 { width: 37px; }
.e2 { width: 55px; }
.lockc { padding: 0 0 0 8px; }
.lockc svg { width: 23px; height: 22px; }

.wintab { position: absolute; left: 1749px; top: 0; filter: drop-shadow(1px 2px 2px #8895ad); }
.wintab svg { width: 144px; height: 38px; }

.taskbar { height: 56px; display: flex; background: linear-gradient(90deg, #1a1f28, #15222f 35%, #1a1e28 65%, #181e2c); color: #eef0f2; }
.tk { position: relative; height: 56px; display: flex; align-items: center; justify-content: center; padding-bottom: 2px; }
.sys { width: 67.5px; }
.sys svg { width: 24px; height: 24px; }
.app { width: 68.8px; }
.sys + .app { margin-left: 3px; }
.app svg { width: 33px; height: 33px; }
.run::after { content: ""; position: absolute; left: 6px; right: 7px; bottom: 0; height: 3px; background: #76b0e6; }
.sel { background: #444c57; }
.sel::after { left: 0; right: 0; }
.tk b { position: absolute; font: bold 21px/24px "Open Sans", sans-serif; }
.tk .n { font-size: 16px; left: 22px; }
.tray { flex: none; width: 343px; margin-left: 472px; display: flex; align-items: center; font: 16.5px/25px "Open Sans", sans-serif; font-stretch: normal; border-right: 1px solid #4a525c; }
.ch { width: 19px; height: 11px; }
.cam { width: 18px; height: 24px; margin-left: 16px; }
.bat { width: 24px; height: 18px; margin-left: 12px; }
.cloud { width: 24px; height: 22px; margin-left: 9px; }
.eng { width: 49px; margin-left: 13px; letter-spacing: -.3px; }
.clock { width: 82px; display: flex; flex-direction: column; align-items: center; white-space: nowrap; letter-spacing: -.6px; }
.note { width: 24px; height: 24px; margin-left: 26px; }

.watermark { position: absolute; left: 842px; top: 513px; width: 240px; text-align: center; transform: rotate(-45deg); font: 400 24.5px/30px "Open Sans", "Noto Sans CJK SC", sans-serif; color: #919cac; white-space: nowrap; }
.cursor { position: absolute; left: 4px; top: 84px; width: 18px; height: 27px; }
```
